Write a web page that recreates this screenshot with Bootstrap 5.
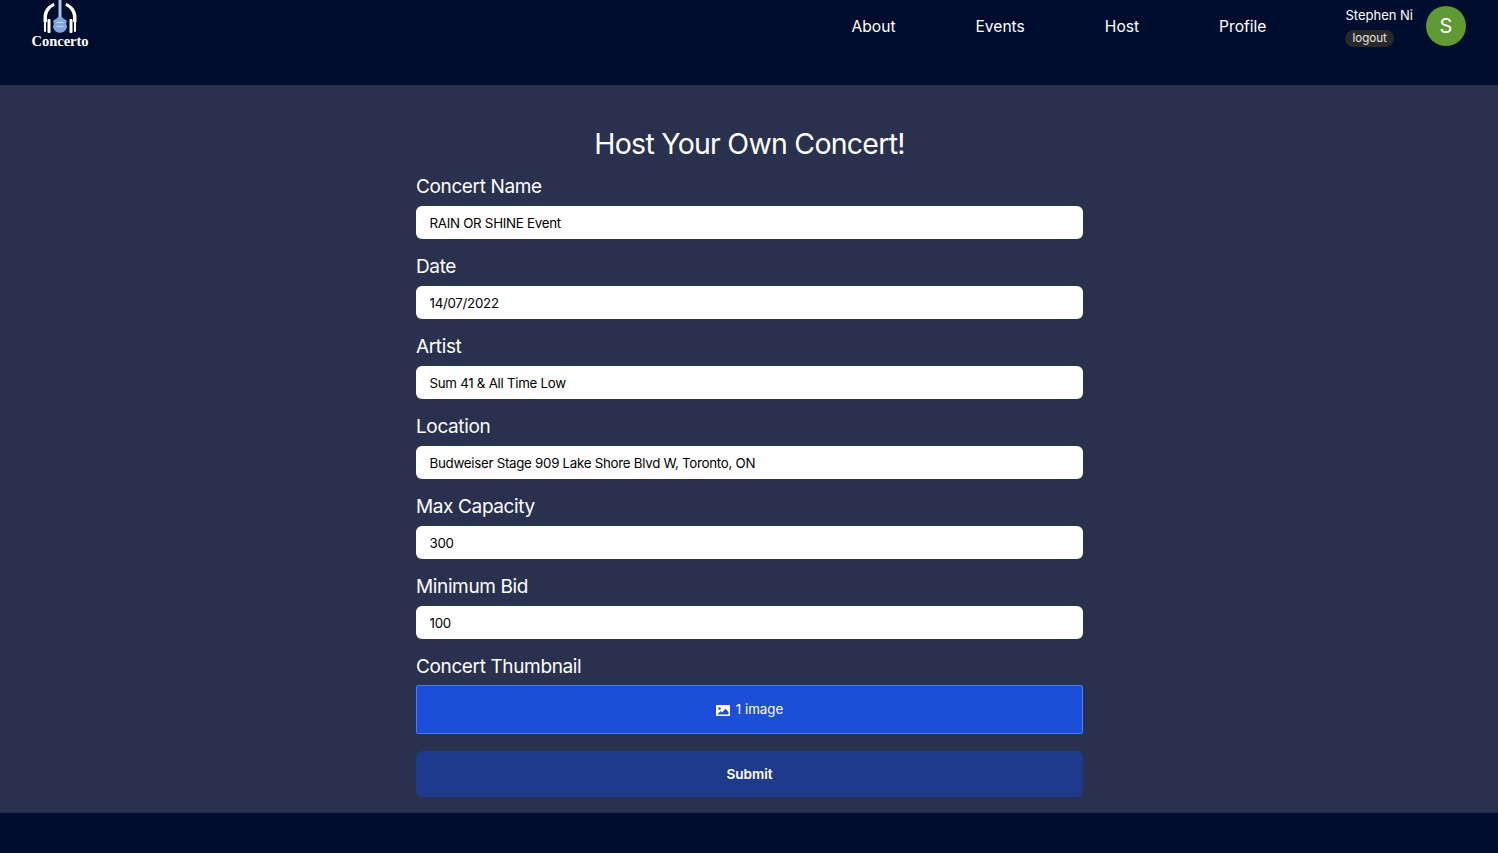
<!DOCTYPE html>
<html lang="en">
<head>
  <meta charset="UTF-8">
  <title>Concerto</title>
  <meta name="viewport" content="width=device-width, initial-scale=1">
  <link href="https://cdn.jsdelivr.net/npm/bootstrap@5.3.0/dist/css/bootstrap.min.css" rel="stylesheet">
  <style>
    body {
      background: #010d2e;
      font-family: Inter, "Liberation Sans", sans-serif;
      color: #fff;
      min-height: 853px;
    }
    .top-bar {
      height: 85px;
      background: #010d2e;
      padding: 0 32px 0 30px;
    }
    .brand-box {
      width: 60px;
      color: #fff;
      text-decoration: none;
    }
    .brand-name {
      font-family: "Liberation Serif", serif;
      font-weight: 700;
      font-size: 14.5px;
      line-height: 13px;
    }
    .top-link {
      color: #fff;
      text-decoration: none;
      font-size: 15.6px;
      line-height: 24px;
    }
    .top-links {
      gap: 80px;
      margin-right: 79px;
      padding-top: 15px;
    }
    .user-box {
      padding-top: 6px;
    }
    .user-name {
      font-size: 13px;
      line-height: 18px;
    }
    .logout-pill {
      display: inline-block;
      background: #292929;
      color: #e5e5e5;
      font-size: 11.6px;
      line-height: 17px;
      padding: 0 7px;
      border-radius: 9px;
      text-decoration: none;
      margin-top: 5.5px;
    }
    .user-circle {
      width: 40px;
      height: 40px;
      background: #5f9a35;
      font-size: 20px;
      margin-left: 13px;
    }
    .host-main {
      background: #29314f;
      height: 728px;
      padding: 41px 0 0 1px;
    }
    .host-form {
      width: 667px;
    }
    .host-title {
      font-size: 28.5px;
      line-height: 36px;
      font-weight: 400;
      margin-bottom: 10px;
      letter-spacing: -0.75px;
    }
    .host-label {
      display: block;
      font-size: 19px;
      line-height: 30px;
      margin-bottom: 4px;
      letter-spacing: -0.37px;
    }
    .host-field {
      height: 33px;
      border: 0;
      border-radius: 6px;
      padding: 0 13.5px;
      font-size: 13.3px;
      letter-spacing: -0.27px;
      color: #000;
      margin-bottom: 13px;
    }
    .thumb-btn {
      height: 49px;
      background: #1d4ed8;
      border: 1px solid #3b82f6;
      border-radius: 2px;
      color: #fff;
      font-size: 13.3px;
      gap: 6px;
      padding-top: 7px;
      margin-top: -1px;
      margin-bottom: 17px;
    }
    .thumb-btn:hover { background: #1d4ed8; border-color: #3b82f6; color: #fff; }
    .submit-btn {
      height: 46px;
      background: #1e3a8a;
      border: 0;
      border-radius: 6px;
      color: #fff;
      font-size: 13.6px;
      font-weight: 600;
    }
    .submit-btn:hover { background: #1e3a8a; color: #fff; }
  </style>
</head>
<body>

  <nav class="top-bar d-flex align-items-start justify-content-between">
    <a href="#" class="brand-box d-flex flex-column align-items-center">
      <svg width="40" height="35" viewBox="0 0 40 35" class="flex-shrink-0">
        <!-- headphones -->
        <path d="M14 3C7 5.500 3.500 11 3.500 17.500V22H7V17.500C7 12 10 8 14.500 6z" fill="#fff"/>
        <path d="M26 3C33 5.500 36.500 11 36.500 17.500V22H33V17.500C33 12 30 8 25.500 6z" fill="#fff"/>
        <rect x="4" y="21" width="2" height="11" rx="1" fill="#fff"/>
        <rect x="7.500" y="19" width="3" height="14" rx="1" fill="#fff"/>
        <rect x="34" y="21" width="2" height="11" rx="1" fill="#fff"/>
        <rect x="29.500" y="19" width="3" height="14" rx="1" fill="#fff"/>
        <!-- guitar -->
        <rect x="18.500" y="0" width="3" height="22" fill="#a9c5ee"/>
        <path d="M17.500 17c.5 1.500-2.500 2-4 3.500-1 1 .8 2.500.3 4-.8 1.500-1.300 2.500 0 4.500 2 5 10.400 5 12.400 0 1.500-2 .8-3 0-4.500-.5-1.500 1.300-3 .3-4-1.500-1.500-4.500-2-4-3.500z" fill="#7fa6e0"/>
        <rect x="16.500" y="22" width="7" height="1" fill="#c4d7f3"/>
        <rect x="16.500" y="26" width="7" height="1" fill="#c4d7f3"/>
      </svg>
      <span class="brand-name">Concerto</span>
    </a>
    <div class="d-flex align-items-start">
      <div class="top-links d-flex">
        <a href="#" class="top-link">About</a>
        <a href="#" class="top-link">Events</a>
        <a href="#" class="top-link">Host</a>
        <a href="#" class="top-link">Profile</a>
      </div>
      <div class="user-box d-flex align-items-start">
        <div>
          <div class="user-name">Stephen Ni</div>
          <a href="#" class="logout-pill">logout</a>
        </div>
        <div class="user-circle rounded-circle d-flex align-items-center justify-content-center">S</div>
      </div>
    </div>
  </nav>

  <main class="host-main d-flex justify-content-center">
    <form class="host-form">
      <h1 class="host-title text-center">Host Your Own Concert!</h1>

      <label class="host-label" for="cname">Concert Name</label>
      <input id="cname" class="form-control host-field" value="RAIN OR SHINE Event">

      <label class="host-label" for="cdate">Date</label>
      <input id="cdate" class="form-control host-field" value="14/07/2022">

      <label class="host-label" for="cartist">Artist</label>
      <input id="cartist" class="form-control host-field" value="Sum 41 &amp; All Time Low">

      <label class="host-label" for="cloc">Location</label>
      <input id="cloc" class="form-control host-field" value="Budweiser Stage 909 Lake Shore Blvd W, Toronto, ON">

      <label class="host-label" for="ccap">Max Capacity</label>
      <input id="ccap" class="form-control host-field" value="300">

      <label class="host-label" for="cbid">Minimum Bid</label>
      <input id="cbid" class="form-control host-field" value="100">

      <label class="host-label">Concert Thumbnail</label>
      <button type="button" class="btn thumb-btn w-100 d-flex align-items-center justify-content-center">
        <svg width="14" height="11" viewBox="0 0 14 11">
          <path fill="#fff" fill-rule="evenodd" d="M1 0h12a1 1 0 0 1 1 1v9a1 1 0 0 1-1 1H1a1 1 0 0 1-1-1V1a1 1 0 0 1 1-1zm2.500 2.200a1.300 1.300 0 1 0 0 2.600 1.300 1.300 0 0 0 0-2.600zM1.500 9.500h11V7L9.500 3.800 6 7.500 4.500 6z"/>
        </svg>
        <span>1 image</span>
      </button>
      <button type="button" class="btn submit-btn w-100">Submit</button>
    </form>
  </main>

</body>
</html>
